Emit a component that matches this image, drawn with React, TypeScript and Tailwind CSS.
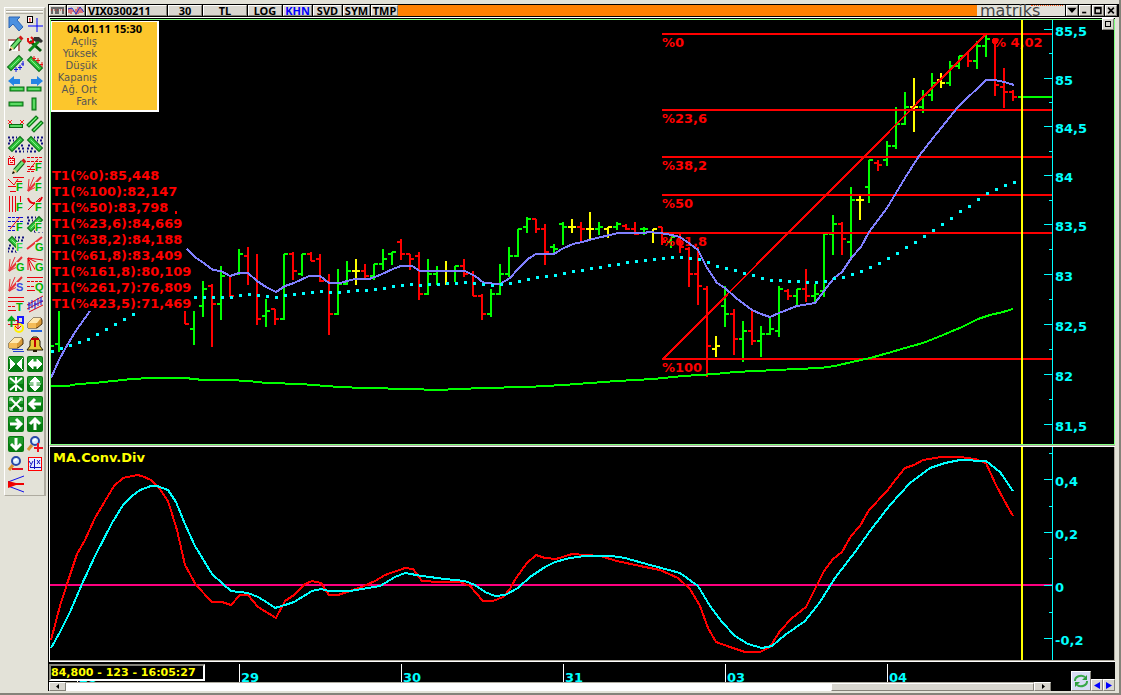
import type { ReactNode } from "react";

type Bar = {
	x: number;
	high: number;
	low: number;
	open: number;
	close: number;
	color: string;
};

const G = "#00ff00";
const R = "#ff0000";
const Y = "#ffff00";

// [color, high, low, open, close], one bar every 9px. 0 leaves the tick out
type Row = [string, number, number, number, number];

const ROWS: Row[] = [
	[R, 311, 324, 0, 324],
	[G, 311, 345, 329, 0],
	[G, 281, 317, 306, 289],
	[R, 284, 347, 286, 304],
	[G, 266, 320, 304, 276],
	[R, 275, 297, 0, 296],
	[G, 249, 275, 0, 254],
	[R, 247, 285, 256, 0],
	[R, 254, 325, 0, 319],
	[G, 299, 327, 316, 311],
	[R, 309, 325, 309, 319],
	[G, 254, 320, 319, 254],
	[R, 252, 280, 254, 271],
	[G, 254, 276, 274, 254],
	[R, 252, 261, 254, 261],
	[R, 254, 282, 259, 281],
	[R, 274, 335, 281, 314],
	[G, 269, 315, 314, 284],
	[G, 261, 285, 284, 271],
	[Y, 259, 285, 271, 271],
	[R, 264, 279, 271, 276],
	[G, 264, 280, 276, 264],
	[G, 249, 270, 264, 259],
	[G, 252, 265, 254, 252],
	[R, 239, 260, 242, 254],
	[R, 254, 270, 254, 259],
	[R, 252, 300, 256, 294],
	[G, 259, 295, 294, 274],
	[G, 266, 285, 274, 0],
	[Y, 261, 285, 271, 271],
	[G, 266, 282, 0, 266],
	[R, 259, 277, 266, 274],
	[R, 271, 296, 0, 296],
	[R, 294, 320, 296, 314],
	[G, 289, 317, 314, 294],
	[G, 264, 295, 294, 274],
	[G, 247, 277, 274, 256],
	[G, 229, 257, 256, 229],
	[G, 217, 233, 227, 219],
	[R, 219, 233, 219, 229],
	[R, 224, 265, 229, 252],
	[G, 244, 254, 247, 249],
	[G, 222, 245, 224, 227],
	[Y, 219, 233, 227, 227],
	[R, 222, 242, 227, 229],
	[Y, 212, 239, 229, 229],
	[G, 222, 235, 229, 227],
	[Y, 227, 238, 229, 227],
	[G, 222, 230, 227, 224],
	[R, 224, 230, 226, 229],
	[R, 222, 235, 229, 234],
	[G, 227, 235, 229, 229],
	[Y, 229, 243, 0, 229],
	[R, 227, 245, 227, 242],
	[G, 237, 248, 242, 237],
	[R, 234, 253, 0, 247],
	[R, 247, 287, 249, 274],
	[R, 247, 305, 274, 286],
	[R, 286, 377, 289, 346],
	[Y, 336, 357, 349, 346],
	[G, 286, 327, 306, 314],
	[R, 309, 355, 314, 339],
	[G, 321, 362, 339, 331],
	[R, 309, 345, 331, 341],
	[G, 326, 357, 341, 334],
	[G, 317, 335, 334, 329],
	[G, 286, 337, 331, 289],
	[R, 289, 300, 291, 296],
	[G, 289, 306, 296, 289],
	[R, 269, 302, 289, 296],
	[G, 284, 303, 296, 294],
	[G, 233, 297, 291, 234],
	[G, 215, 255, 234, 224],
	[R, 222, 255, 224, 239],
	[G, 187, 257, 242, 200],
	[Y, 195, 220, 200, 200],
	[G, 160, 203, 187, 160],
	[R, 160, 171, 163, 165],
	[G, 141, 166, 160, 146],
	[G, 107, 149, 146, 124],
	[G, 92, 125, 124, 107],
	[Y, 78, 132, 107, 107],
	[G, 90, 113, 107, 95],
	[G, 73, 101, 95, 83],
	[Y, 73, 88, 80, 83],
	[G, 61, 86, 83, 66],
	[G, 56, 69, 66, 56],
	[R, 52, 67, 0, 61],
	[G, 41, 69, 61, 46],
	[G, 34, 57, 46, 39],
	[R, 40, 96, 0, 85],
	[R, 68, 108, 87, 92],
	[R, 90, 101, 92, 97],
];

const BARS: Bar[] = [
	{ x: 50, high: 0, low: 0, open: 0, close: 346, color: G },
	{ x: 59, high: 311, low: 352, open: 344, close: 0, color: G },
	{ x: 176, high: 211, low: 214, open: 0, close: 0, color: R },
	...ROWS.map(([color, high, low, open, close], i) => ({
		x: 185 + i * 9,
		high,
		low,
		open,
		close,
		color,
	})),
];

const DOTS_START = [351, 348, 345, 342, 339, 334, 329, 324, 319, 314];
const DOTS = [
	297, 297, 297, 297, 297, 295, 294, 295, 296, 297, 295, 294, 293, 292, 291,
	292, 292, 291, 290, 290, 289, 288, 286, 285, 284, 285, 284, 284, 283, 283,
	282, 283, 284, 285, 284, 283, 281, 279, 277, 276, 275, 273, 271, 270, 268,
	267, 265, 264, 262, 261, 260, 259, 258, 257, 257, 258, 259, 262, 266, 268,
	270, 273, 275, 278, 280, 280, 281, 281, 282, 282, 281, 278, 277, 274, 271,
	267, 263, 258, 253, 247, 242, 236, 230, 224, 218, 211, 206, 199, 193, 189,
	185, 182,
];

const FAST_MA =
	"187,249 195,257 205,264 213,270 221,271 230,276 239,273 248,273 257,281 266,287 276,292 285,286 294,283 309,276 320,276 329,283 340,283 355,279 369,279 380,275 393,269 401,266 412,266 420,271 465,271 475,276 484,283 500,284 510,278 518,269 528,259 536,254 554,254 562,249 573,244 582,242 593,239 618,233 643,233 650,232 667,234 680,237 690,244 698,250 706,266 717,283 725,288 736,298 752,310 761,314 770,317 779,313 797,306 815,303 824,291 834,278 842,272 852,257 861,247 869,232 887,208 905,178 919,156 933,138 958,107 986,80 995,80 1004,82 1014,85";

const SLOW_MA =
	"51,386 68,386 77,384 95,383 113,381 132,379 150,378 185,378 203,380 230,380 248,381 267,383 302,384 312,385 328,386 338,387 365,388 410,389 437,390 482,388 527,387 563,385 590,383 617,381 653,379 683,376 715,374 735,372 797,369 820,368 835,366 852,362 870,358 888,353 905,348 923,343 943,335 962,327 978,319 990,315 1003,312 1013,309";

const MACD =
	"51,639 60,605 68,580 77,553 85,539 95,517 105,500 114,485 123,477 137,474 142,475 151,479 159,487 168,500 177,529 185,564 196,584 212,601 222,601 231,604 240,594 248,594 258,606 276,617 285,600 294,594 305,583 312,580 321,582 329,594 338,594 347,591 362,586 375,580 385,574 405,567 413,568 422,580 440,581 460,581 470,585 483,600 493,600 503,596 510,588 516,577 527,562 536,554 545,557 556,558 572,553 600,555 617,560 640,565 660,569 678,577 690,588 700,605 708,627 716,641 730,646 745,651 760,651 770,646 780,630 792,617 806,606 815,588 824,570 833,558 842,551 851,535 860,525 869,509 887,490 896,478 905,467 914,464 923,459 941,456 960,456 975,458 986,462 995,482 1004,499 1013,515";

const SIGNAL =
	"51,647 60,631 70,611 82,583 95,555 112,522 123,504 132,495 140,489 151,485 157,485 168,489 176,501 185,523 195,545 212,573 223,583 231,590 248,592 258,596 268,602 275,607 285,604 294,601 312,590 321,588 329,590 350,590 380,585 395,576 405,572 422,575 445,578 465,580 475,584 485,591 495,595 505,594 518,587 530,576 545,566 555,561 570,557 585,555 612,555 625,557 650,564 680,572 698,585 710,605 722,621 735,635 748,643 762,647 772,645 785,634 805,620 820,601 835,577 855,551 870,530 890,504 910,482 930,467 945,462 960,459 986,460 1000,471 1013,490";

const FIBS = [
	{ y: 34, label: "%0" },
	{ y: 110, label: "%23,6" },
	{ y: 157, label: "%38,2" },
	{ y: 195, label: "%50" },
	{ y: 233, label: "%61,8" },
	{ y: 359, label: "%100" },
];

const LEVELS = [
	"T1(%0):85,448",
	"T1(%100):82,147",
	"T1(%50):83,798",
	"T1(%23,6):84,669",
	"T1(%38,2):84,188",
	"T1(%61,8):83,409",
	"T1(%161,8):80,109",
	"T1(%261,7):76,809",
	"T1(%423,5):71,469",
];

const PRICE_TICKS: [number, string][] = [
	[29, "85,5"],
	[78, "85"],
	[126, "84,5"],
	[175, "84"],
	[224, "83,5"],
	[274, "83"],
	[324, "82,5"],
	[374, "82"],
	[424, "81,5"],
];

const MACD_TICKS: [number, string][] = [
	[478, "0,4"],
	[531, "0,2"],
	[584, "0"],
	[637, "-0,2"],
];

const DAYS: [number, string][] = [
	[77, "28"],
	[239, "29"],
	[401, "30"],
	[563, "31"],
	[725, "03"],
	[887, "04"],
];

const RAISED =
	"border border-t-white border-l-white border-r-[#85837a] border-b-[#85837a] bg-[#d8d6cf]";
const CHART_TEXT = "font-['DejaVu_Sans',sans-serif] text-[13px] font-bold";

/* ---------- toolbar icons ---------- */

const Pipe = ({ d, w = 5 }: { d: string; w?: number }) => (
	<g fill="none" strokeLinecap="square">
		<path d={d} stroke="#0a6b14" strokeWidth={w} />
		<path d={d} stroke="#2fc43c" strokeWidth={w - 2} />
		<path d={d} stroke="#8af08c" strokeWidth={1} />
	</g>
);

const Letter = ({ c, color = "#00b400" }: { c: string; color?: string }) => (
	<>
		<rect x="8" y="6" width="8" height="10" fill="#e3e2d8" />
		<text
			x="8"
			y="15"
			fill={color}
			className="font-['Liberation_Sans',sans-serif] text-[11px] font-bold"
		>
			{c}
		</text>
	</>
);

const Line = ({ d, c = "#e8000c", w = 1, dash }: { d: string; c?: string; w?: number; dash?: string }) => (
	<path d={d} stroke={c} strokeWidth={w} strokeDasharray={dash} fill="none" />
);

const Fan = () => (
	<>
		<Line d="M1 15L15 8M1 15L7 1M1 15L2 3" c="#e83038" />
		<Line d="M1 15L14 1" c="#e83038" w={2} />
	</>
);

const Pencil = () => (
	<>
		<path d="M4 12L12 3" stroke="#0c5c14" strokeWidth="5" />
		<path d="M4 12L12 3" stroke="#6fe070" strokeWidth="3" />
		<path d="M12 3L14 1" stroke="#d01818" strokeWidth="4" />
		<path d="M1 15L3 10L6 13Z" fill="#f0d080" />
		<path d="M1 15L2 12L4 14Z" fill="#000" />
	</>
);

const Corners = ({ flip }: { flip?: boolean }) => (
	<g transform={flip ? "translate(16 0) scale(-1 1)" : undefined}>
		<Line d="M0 1.5H9M1 4.5H6M0 7.5H3" c="#101080" w={2} dash="2 2" />
		<Line d="M13 9.5H16M10 12.5H16M7 15.5H16" c="#101080" w={2} dash="2 2" />
		<Pipe d="M4 12L12 4" w={6} />
	</g>
);

const GreenBox = ({ children }: { children: ReactNode }) => (
	<>
		<rect width="16" height="16" rx="2" fill="#067a10" />
		<rect x="1" y="1" width="14" height="7" rx="1" fill="#1f9a2a" />
		<g fill="#fff" stroke="#fff" strokeLinejoin="miter">
			{children}
		</g>
	</>
);

const Arrow = ({ turn }: { turn: string }) => (
	<GreenBox>
		<path
			d="M14 8H5M8 3L3 8L8 13"
			strokeWidth="3"
			fill="none"
			transform={turn}
		/>
	</GreenBox>
);

const Lens = () => (
	<>
		<path d="M5 9L1 14" stroke="#d89030" strokeWidth="3" />
		<circle cx="8" cy="5" r="4" fill="#d4ecff" stroke="#2848a8" strokeWidth="2" />
		<path d="M6 5L9 3" stroke="#fff" strokeWidth="2" />
	</>
);

const Eraser = () => (
	<>
		<path d="M1 7L6 2H14L15 4V8L10 12H1Z" fill="#d89a38" stroke="#4a3008" />
		<path d="M1 7L6 2H14L10 7Z" fill="#ffe9b0" />
		<path d="M1 7H9V12H1Z" fill="#f4bc58" />
	</>
);

const TOOLS: { name: string; icon: ReactNode }[] = [
	{
		name: "Select",
		icon: <path d="M1 1H12L9 4L15 11L11 15L5 8L1 12Z" fill="#4a90e0" stroke="#2c64b4" />,
	},
	{
		name: "Crosshair",
		icon: (
			<>
				<Line d="M10 2V16M1 10H16" c="#0000ff" />
				<rect x="0.500" y="0.500" width="5" height="6" fill="#fff" stroke="#000" />
				<Line d="M3 2V6M2 3H3" c="#e00" />
			</>
		),
	},
	{
		name: "Draw",
		icon: (
			<>
				<path d="M0 4H11V15" fill="none" stroke="#800000" />
				<path d="M1 5H10V15L1 15Z" fill="#fff" />
				<Pencil />
			</>
		),
	},
	{
		name: "Settings",
		icon: (
			<>
				<path d="M3 5L14 15" stroke="#04580a" strokeWidth="3" />
				<path d="M12 5L2 15" stroke="#0c8a18" strokeWidth="3" />
				<path d="M1 2V5L3 7L6 6L6 3L4 1" fill="none" stroke="#e01010" strokeWidth="2" />
				<path d="M7 1H12L16 5L14 7L11 5L9 6L6 4Z" fill="#303030" />
			</>
		),
	},
	{
		name: "Support",
		icon: (
			<>
				<Pipe d="M3 11L11 3" w={6} />
				<Line d="M8 11V16M6 13.500H10M12 9V14M10 11.500H14M15 5V10M13 8H16" c="#1010e0" />
			</>
		),
	},
	{
		name: "Resistance",
		icon: (
			<>
				<Pipe d="M4 4L12 12" w={6} />
				<Line d="M7 0V5M5 2.500H9M11 2V7M9 4.500H13M15 6V11M13 8.500H16" c="#e81010" />
			</>
		),
	},
	{
		name: "Extend left",
		icon: (
			<>
				<path d="M0 5L6 0V3H12V8H6V10Z" fill="#2484e4" />
				<Pipe d="M4 13H14" w={5} />
			</>
		),
	},
	{
		name: "Extend right",
		icon: (
			<>
				<path d="M16 5L10 0V3H4V8H10V10Z" fill="#2484e4" />
				<Pipe d="M2 13H12" w={5} />
			</>
		),
	},
	{ name: "Horizontal", icon: <Pipe d="M3 8H13" w={5} /> },
	{ name: "Vertical", icon: <Pipe d="M7 4V12" w={5} /> },
	{
		name: "Segment",
		icon: (
			<>
				<Pipe d="M3 10H13" w={4} />
				<Line d="M0 4L4 8M4 4L0 8M12 4L16 8M16 4L12 8" c="#ff2020" />
			</>
		),
	},
	{
		name: "Parallel",
		icon: (
			<>
				<Pipe d="M2 9L9 2" w={4} />
				<Pipe d="M7 14L14 7" w={4} />
			</>
		),
	},
	{ name: "Channel up", icon: <Corners /> },
	{ name: "Channel down", icon: <Corners flip /> },
	{
		name: "Robot",
		icon: (
			<>
				<g transform="translate(3 3)">
					<Pencil />
				</g>
				<rect x="0.500" y="2.500" width="6" height="6" fill="#ffe0d8" stroke="#e80010" />
				<Line d="M1 0L3 2M6 0L4 2M2 4.500H3M4 4.500H6M2 6.500H5" />
			</>
		),
	},
	{
		name: "Fibonacci levels",
		icon: (
			<>
				<Line d="M0 1.500H16M0 5.500H16M0 10.500H8M0 15.500H8" dash="3 1" />
				<Line d="M3 13L11 3M1 13.500H8" />
				<Letter c="F" />
			</>
		),
	},
	{
		name: "Fibonacci projection",
		icon: (
			<>
				<Line d="M5 1.500H16M8 5.500H14M0 10.500H8M2 15.500H8M0 3L6 9L10 3" />
				<Letter c="F" />
			</>
		),
	},
	{
		name: "Fibonacci fan",
		icon: (
			<>
				<Fan />
				<Letter c="F" />
			</>
		),
	},
	{
		name: "Fibonacci time",
		icon: (
			<>
				<Line d="M1.500 0V16M4.500 0V16M7.500 0V16M12.500 0V6" />
				<Letter c="F" />
			</>
		),
	},
	{
		name: "Fibonacci arc",
		icon: (
			<>
				<Line d="M1 2Q3 8 8 7Q13 7 15 1" w={2} />
				<Line d="M1 14L13 2" />
				<Letter c="F" />
			</>
		),
	},
	{
		name: "Fibonacci channel",
		icon: (
			<>
				<Line d="M0 1.500H16M0 5.500H16M0 10.500H8M0 14.500H8" c="#1010d0" dash="3 1" />
				<Line d="M2 13L12 1" />
				<Letter c="F" />
			</>
		),
	},
	{
		name: "Fibonacci band up",
		icon: (
			<>
				<Corners />
				<Letter c="F" />
			</>
		),
	},
	{
		name: "Fibonacci band down",
		icon: (
			<>
				<Corners flip />
				<Letter c="F" color="#30d840" />
			</>
		),
	},
	{
		name: "Gann line",
		icon: (
			<>
				<Line d="M0 13L15 1" c="#e83038" w={2} />
				<Letter c="G" />
			</>
		),
	},
	{
		name: "Gann fan",
		icon: (
			<>
				<Fan />
				<Letter c="G" />
			</>
		),
	},
	{
		name: "Gann fan down",
		icon: (
			<>
				<Line d="M1 2L16 4M1 2L15 9M1 2L9 15M1 2L4 15M1 2L1 14" />
				<Letter c="G" />
			</>
		),
	},
	{
		name: "Speed lines",
		icon: (
			<>
				<Fan />
				<Letter c="S" color="#3848e0" />
			</>
		),
	},
	{
		name: "Quadrant",
		icon: (
			<>
				<Line d="M0 1.500H16M0 14.500H8" />
				<Line d="M0 5.500H16M0 10.500H8" dash="3 1" />
				<Letter c="Q" />
			</>
		),
	},
	{
		name: "Tirone",
		icon: (
			<>
				<Line d="M0 1.500H16M0 5.500H16M0 14.500H8" />
				<Line d="M0 10.500H8" dash="3 1" />
				<Letter c="T" />
			</>
		),
	},
	{
		name: "Regression",
		icon: (
			<>
				<Line d="M0 9L16 0M0 13L16 5M2 16L16 9" />
				<Line d="M2 6V14M5 4V12M8 5V13M11 2V10M14 1V9M1 9H4M7 8H10M12 5H16" c="#1818d8" />
			</>
		),
	},
	{
		name: "Shapes",
		icon: (
			<>
				<rect x="10" y="1" width="5" height="6" fill="none" stroke="#1818ff" strokeWidth="2" />
				<circle cx="11" cy="12" r="4" fill="none" stroke="#ffee00" strokeWidth="2" />
				<Line d="M0 4.500H10V13M0 8.500H10M7 10L10 13L13 10" c="#e00010" />
				<Line d="M3.500 11V2M0 5L3.500 1L7 5" c="#00a818" w={2} />
			</>
		),
	},
	{
		name: "Erase last",
		icon: (
			<>
				<Eraser />
				<Line d="M4 15H15" c="#2060e0" w={2} />
			</>
		),
	},
	{
		name: "Erase all",
		icon: (
			<>
				<Eraser />
				<Line d="M4 13.500H15M5 15.500H16" c="#2040d0" />
			</>
		),
	},
	{
		name: "Alarm",
		icon: (
			<>
				<path d="M6 1H10L13 5V10L16 14H0L3 10V5Z" fill="#e8c838" stroke="#201800" />
				<path d="M4 3H12M8 3V11" stroke="#c00000" strokeWidth="2" />
				<path d="M6 14H10V16H6Z" fill="#201800" />
			</>
		),
	},
	{
		name: "Compress horizontally",
		icon: (
			<GreenBox>
				<path d="M2 3L7 8L2 13ZM14 3L9 8L14 13Z" stroke="none" />
				<path d="M1 2L7 8L1 14M15 2L9 8L15 14" fill="none" />
			</GreenBox>
		),
	},
	{
		name: "Expand horizontally",
		icon: (
			<GreenBox>
				<path d="M1 8L6 3V6H10V3L15 8L10 13V10H6V13Z" />
			</GreenBox>
		),
	},
	{
		name: "Compress vertically",
		icon: (
			<GreenBox>
				<path d="M2 2L8 7L14 2M2 14L8 9L14 14" fill="none" strokeWidth="2" />
				<path d="M7 1H9V6H7ZM7 10H9V15H7Z" stroke="none" />
			</GreenBox>
		),
	},
	{
		name: "Expand vertically",
		icon: (
			<GreenBox>
				<path d="M8 1L13 6H9V10H13L8 15L3 10H7V6H3Z" />
				<path d="M2 8H14" />
			</GreenBox>
		),
	},
	{
		name: "Fit",
		icon: (
			<GreenBox>
				<path d="M3 3L13 13M13 3L3 13" strokeWidth="2" />
				<path d="M2 5V2H5M11 2H14V5M14 11V14H11M5 14H2V11" fill="none" />
			</GreenBox>
		),
	},
	{ name: "Left", icon: <Arrow turn="rotate(0)" /> },
	{ name: "Right", icon: <Arrow turn="rotate(180 8 8)" /> },
	{ name: "Up", icon: <Arrow turn="rotate(90 8 8)" /> },
	{ name: "Down", icon: <Arrow turn="rotate(270 8 8)" /> },
	{
		name: "Zoom in",
		icon: (
			<>
				<Lens />
				<Line d="M11 7V16M7 12H16" c="#f01020" w={2} />
			</>
		),
	},
	{
		name: "Zoom out",
		icon: (
			<>
				<Lens />
				<Line d="M4 13H15" c="#e01020" w={2} />
			</>
		),
	},
	{
		name: "Axes",
		icon: (
			<>
				<rect x="1.500" y="1.500" width="13" height="13" fill="#e8ecff" stroke="#ff0000" />
				<Line d="M7.500 3V13M3 11.500H14M10 4L13 8M13 4L10 8M2 5L4 8M6 5L3 11" c="#1010c0" />
			</>
		),
	},
	{
		name: "Andrews pitchfork",
		icon: (
			<>
				<Line d="M0 6L16 0M0 10L16 16" c="#1010e8" />
				<path d="M0 5L8 7H16V9H8L0 12Z" fill="#f00000" />
			</>
		),
	},
];

const Toolbar = () => (
	<aside className="mt-[3px] flex w-[42px] shrink-0 flex-col self-start border-t border-l border-r-2 border-b border-t-white border-l-white border-r-[#aeaba0] border-b-[#aeaba0] pb-px">
		<div className="mx-px h-[3px] border-b border-b-[#aeaba0]" />
		<div className="mx-px h-[3px] border-t border-b border-t-white border-b-[#aeaba0]" />
		<div className="grid grid-cols-2 px-px">
			{TOOLS.map((tool) => (
				<button
					key={tool.name}
					aria-label={tool.name}
					className="flex size-5 items-center justify-center"
				>
					<svg width="16" height="16" viewBox="0 0 16 16" className="overflow-visible">
						{tool.icon}
					</svg>
				</button>
			))}
		</div>
	</aside>
);

/* ---------- title bar ---------- */

const TABS = [
	{ label: "VIX0300211", style: "w-[81px] pl-px text-left" },
	{ label: "30", style: "w-[34px] text-center" },
	{ label: "TL", style: "w-[44px] text-center" },
	{ label: "LOG", style: "w-[34px] text-center" },
	{ label: "KHN", style: "w-[29px] text-center text-[#0000ff]" },
	{ label: "SVD", style: "w-[29px] text-center" },
	{ label: "SYM", style: "w-[27px] text-center" },
	{ label: "TMP", style: "w-[27px] text-center" },
];

const WINDOW_BUTTONS = [
	{ name: "Menu", d: "M2 3H9L5.500 7Z", fill: "#000" },
	{ name: "Minimize", d: "M2 8H7", fill: "none" },
	{ name: "Maximize", d: "M2 2H9V9H2ZM2 3H9", fill: "none" },
	{ name: "Close", d: "M2 2L9 9M9 2L2 9", fill: "none" },
];

const TitleBar = () => (
	<header className="flex h-[13px] shrink-0 gap-px bg-black py-px pl-px font-['Noto_Sans',sans-serif] text-[11px] font-bold">
		<button aria-label="Template" className={`w-[17px] ${RAISED}`}>
			<svg width="15" height="9" className="block">
				<path d="M2 8V2H6V8M8 8V2H13V8" fill="none" stroke="#666" strokeWidth="2" />
				<path d="M1 4H14" stroke="#d02020" strokeDasharray="1 2" />
			</svg>
		</button>
		<button aria-label="Indicator" className={`w-[18px] ${RAISED}`}>
			<svg width="16" height="9" className="block">
				<path d="M1 2V7M3 2V8M5 4V6M8 3V9M10 1V8M12 1V7M14 3V7" stroke="#e01020" />
				<path d="M0 3L4 2L8 8L12 1L16 6" fill="none" stroke="#2030d0" />
			</svg>
		</button>
		{TABS.map((tab) => (
			<button key={tab.label} className={`${RAISED} ${tab.style} leading-[9px] whitespace-nowrap`}>
				{tab.label}
			</button>
		))}
		<div className="-ml-px flex-1 bg-[#ff8000]" />
		<div className="relative -ml-px flex h-[11px] w-[88px] items-center bg-[#e2e1da] pl-[3px] font-['DejaVu_Sans',sans-serif] text-[16px] leading-[11px] font-normal text-[#444]">
			matriks
			<span className="absolute top-0 right-[2px] w-8 border-t border-dotted border-[#ff6020]" />
		</div>
		{WINDOW_BUTTONS.map((b) => (
			<button key={b.name} aria-label={b.name} className={`w-3 ${RAISED}`}>
				<svg width="10" height="9" viewBox="0 0 11 11" className="block">
					<path d={b.d} fill={b.fill} stroke="#000" strokeWidth="2" />
				</svg>
			</button>
		))}
		<span className="w-px" />
	</header>
);

/* ---------- charts ---------- */

const Axis = ({
	top,
	ticks,
	minor,
}: {
	top: number;
	ticks: [number, string][];
	minor: number[];
}) => (
	<svg className="h-full w-[62px] shrink-0 overflow-visible" shapeRendering="crispEdges">
		<rect x="0" y="0" width="1" height="100%" fill="#00ffff" />
		<g transform={`translate(0 ${-top})`}>
			{minor.map((y) => (
				<rect key={y} x="-3" y={y} width="3" height="1" fill="#00ffff" />
			))}
			{ticks.map(([y, label]) => (
				<g key={label} fill="#00ffff">
					<rect x="-8" y={y} width="8" height="1" />
					<text x="3" y={y + 7} className={CHART_TEXT}>
						{label}
					</text>
				</g>
			))}
		</g>
	</svg>
);

const PriceBar = ({ bar }: { bar: Bar }) => (
	<g fill={bar.color}>
		<rect x={bar.x - 1} y={bar.high} width="2" height={bar.low - bar.high} />
		{bar.open > 0 && <rect x={bar.x - 4} y={bar.open - 1} width="4" height="2" />}
		{bar.close > 0 && <rect x={bar.x} y={bar.close - 1} width="4" height="2" />}
	</g>
);

const INFO_ROWS = ["Açılış", "Yüksek", "Düşük", "Kapanış", "Ağ. Ort", "Fark"];

const PriceChart = () => (
	<section className="relative flex min-h-0 flex-[429] border-t border-b border-l border-white border-b-[#aeaba0] pt-px">
		<div className="relative flex min-h-0 flex-1 border border-[#80ff80]">
			<svg className="h-full min-w-0 flex-1" shapeRendering="crispEdges">
				<g transform="translate(-51 -20)">
					{BARS.map((bar) => (
						<PriceBar key={bar.x} bar={bar} />
					))}
					<g fill="#ff0000">
						{FIBS.map((f) => (
							<g key={f.label}>
								<rect x="662" y={f.y - 1} width="2000" height="2" />
								<text x="662" y={f.y + 13} className={CHART_TEXT}>
									{f.label}
								</text>
							</g>
						))}
						<circle cx="995" cy="41" r="3" />
						<text x="993" y="47" className={CHART_TEXT}>
							% 4,02
						</text>
					</g>
					<path d="M663 359L986 34" stroke="#ff0000" strokeWidth="2" />
					<polyline points={SLOW_MA} fill="none" stroke="#00ff00" strokeWidth="2" />
					<g fill="none" stroke="#8080ff" strokeWidth="2">
						<polyline points="51,378 59,360 65,349 75,332 90,311" />
						<polyline points={FAST_MA} />
					</g>
					<g fill="#00ffff">
						{DOTS_START.map((y, i) => (
							<rect key={i} x={51 + i * 9} y={y - 1} width="3" height="3" />
						))}
						{DOTS.map((y, i) => (
							<rect key={i} x={194 + i * 9} y={y - 1} width="3" height="3" />
						))}
					</g>
					<rect x="1018" y="96" width="2000" height="2" fill="#00ff00" />
					<rect x="1021" y="20" width="2" height="2000" fill="#ffff00" />
				</g>
			</svg>
			<Axis
				top={20}
				ticks={PRICE_TICKS}
				minor={[53, 102, 151, 200, 249, 299, 349, 399]}
			/>
			<div className="absolute top-px left-0 h-[91px] w-[108px] border border-r-2 border-b-2 border-white bg-[#fcc62c] pt-px">
				<p className="pb-px text-center font-['Noto_Sans',sans-serif] text-[11px] leading-3 font-bold">
					04.01.11 15:30
				</p>
				{INFO_ROWS.map((row) => (
					<p
						key={row}
						className="w-[45px] text-right font-['DejaVu_Sans',sans-serif] text-[10px] leading-3 text-[#555]"
					>
						{row}
					</p>
				))}
			</div>
			<ul className={`absolute top-[148px] left-px text-[#ff0000] ${CHART_TEXT}`}>
				{LEVELS.map((level) => (
					<li key={level} className="leading-4">
						{level}
					</li>
				))}
			</ul>
		</div>
		<button
			aria-label="Restore panel"
			className={`absolute top-0 right-px flex size-3 items-center justify-center ${RAISED}`}
		>
			<span className="size-[6px] border border-black" />
		</button>
	</section>
);

const MacdChart = () => (
	<section className="relative flex min-h-0 flex-[216] border-y border-l border-white">
		<div className="flex min-h-0 flex-1 border-r border-b border-[#aeaba0]">
			<svg className="h-full min-w-0 flex-1" shapeRendering="crispEdges">
				<g transform="translate(-50 -446)" fill="none" strokeWidth="2">
					<rect x="50" y="583" width="2000" height="2" fill="#ff0080" />
					<polyline points={MACD} stroke="#ff0000" />
					<polyline points={SIGNAL} stroke="#00ffff" />
					<rect x="1021" y="446" width="2" height="2000" fill="#ffff00" />
				</g>
				<text x="3" y="15" fill="#ffff00" className={CHART_TEXT}>
					MA.Conv.Div
				</text>
			</svg>
			<Axis top={446} ticks={MACD_TICKS} minor={[452, 505, 557, 611]} />
		</div>
	</section>
);

/* ---------- date strip and scrollbar ---------- */

const Triangle = ({ d, color }: { d: string; color: string }) => (
	<svg width="10" height="9" viewBox="0 0 10 9" className="block">
		<path d={d} fill={color} />
	</svg>
);

const Footer = () => (
	<footer className="flex h-[29px] shrink-0 bg-black">
		<div className="flex min-w-0 flex-1 flex-col">
			<div className="relative h-5 overflow-hidden">
				<svg className="block h-full w-full" shapeRendering="crispEdges">
					<g transform="translate(-49 -662)">
						{DAYS.map(([x, label]) => (
							<g key={label}>
								<rect x={x} y="664" width="1" height="20" fill="#fff" />
								<text x={x + 2} y="682" fill="#00ffff" className={CHART_TEXT}>
									{label}
								</text>
							</g>
						))}
					</g>
				</svg>
				<output className="absolute top-[2px] left-0 flex h-[17px] w-[156px] items-center border-2 border-t-[#85837a] border-r-white border-b-white border-l-[#85837a] bg-black pt-px font-['DejaVu_Sans',sans-serif] text-[11px] leading-3 font-bold whitespace-nowrap text-[#ffff00]">
					84,800 - 123 - 16:05:27
				</output>
			</div>
			<div className="flex h-[9px] bg-white">
				<button aria-label="Scroll left" className={`flex w-[17px] items-center justify-center ${RAISED}`}>
					<Triangle d="M6 2V7L3 4.500Z" color="#000" />
				</button>
				<div className="flex flex-1 justify-end border-t border-[#aeaba0]">
					<div className={`w-[21%] ${RAISED}`} />
				</div>
				<button aria-label="Scroll right" className={`flex w-[17px] items-center justify-center ${RAISED}`}>
					<Triangle d="M4 2V7L7 4.500Z" color="#000" />
				</button>
			</div>
		</div>
		<div className="flex w-16 items-end justify-end">
			<button aria-label="Refresh" className="size-5 border border-t-white border-l-white border-r-[#85837a] border-b-[#85837a] bg-[#d8dcf4]">
				<svg width="18" height="18" viewBox="0 0 18 18">
					<g fill="none" stroke="#38a848" strokeWidth="2">
						<path d="M3 9A6 5 0 0 1 13 5" />
						<path d="M15 9A6 5 0 0 1 5 13" />
					</g>
					<path d="M15 3V8H10ZM3 15V10H8Z" fill="#2c9c3c" />
				</svg>
			</button>
			<button aria-label="Previous" className={`flex size-3 items-center justify-center ${RAISED}`}>
				<Triangle d="M8 1V8L2 4.500Z" color="#0000ff" />
			</button>
			<button aria-label="Next" className={`flex size-3 items-center justify-center ${RAISED}`}>
				<Triangle d="M2 1V8L8 4.500Z" color="#0000ff" />
			</button>
		</div>
	</footer>
);

const App = () => (
	<div className="flex h-screen overflow-hidden border-r-2 border-b-2 border-[#85837a] bg-[#e3e2d8] pt-1 pb-[2px] pl-1">
		<Toolbar />
		<main className="ml-[2px] flex min-w-0 flex-1 flex-col">
			<TitleBar />
			<div className="mr-1 flex min-h-0 flex-1 flex-col bg-black pl-px">
				<PriceChart />
				<MacdChart />
				<Footer />
			</div>
		</main>
	</div>
);

export default App;
